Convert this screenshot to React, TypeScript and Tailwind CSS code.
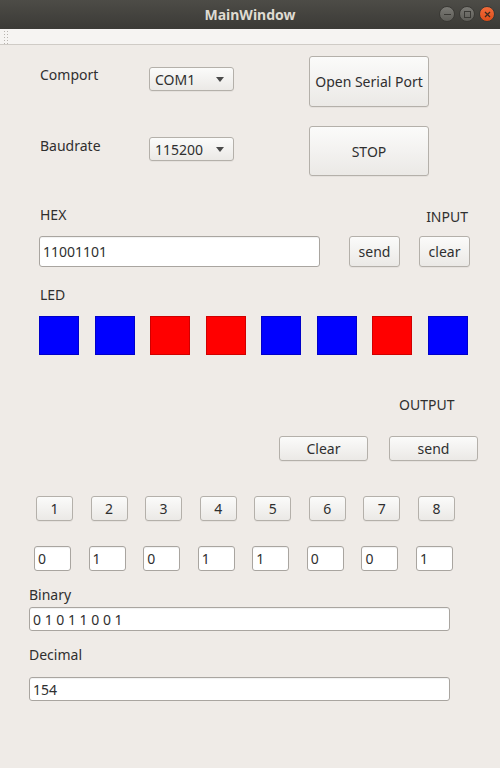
import React from 'react';

const font = { fontFamily: '"Noto Sans", "Open Sans", sans-serif' };

const face =
  'rounded-[3px] border border-[#b4b0aa] bg-gradient-to-b from-[#fbfbfa] to-[#ebe9e6] text-[14px] text-[#2f2f2f] shadow-[0_1px_0_rgba(0,0,0,0.04)]';
const btn = `flex items-center justify-center ${face}`;
const field =
  'flex items-center rounded-[3px] border border-[#a9a5a0] bg-white text-[14px] text-[#2f2f2f] pl-[3px] shadow-[inset_0_1px_1px_rgba(0,0,0,0.06)]';

const leds = [true, true, false, false, true, true, false, true];
const bits = ['0', '1', '0', '1', '1', '0', '0', '1'];

const Combo = ({ value }: { value: string }) => (
  <div className={`flex items-center justify-between ${face} w-[85px] h-[24px] pl-[5px] pr-[9px]`}>
    <span>{value}</span>
    <svg width="8" height="5" viewBox="0 0 8 5">
      <path d="M0 0 L8 0 L4 5 Z" fill="#4a4a4a" />
    </svg>
  </div>
);

const TitleBar = () => (
  <div className="relative h-[29px] bg-gradient-to-b from-[#4d4c47] to-[#3b3a36] flex items-center justify-center">
    <span className="text-[14px] font-bold text-[#dfdbd2]">MainWindow</span>
    <div className="absolute right-[5px] top-[6px] flex gap-[4px]">
      <div className="w-[16px] h-[16px] rounded-full bg-gradient-to-b from-[#7b7a75] to-[#5e5d58] border border-[#3a3935] flex items-center justify-center">
        <div className="w-[7px] h-[1px] bg-[#3a3935]" />
      </div>
      <div className="w-[16px] h-[16px] rounded-full bg-gradient-to-b from-[#7b7a75] to-[#5e5d58] border border-[#3a3935] flex items-center justify-center">
        <div className="w-[7px] h-[7px] border border-[#3a3935]" />
      </div>
      <div className="w-[16px] h-[16px] rounded-full bg-gradient-to-b from-[#f26b3a] to-[#de4d17] border border-[#3a3935] flex items-center justify-center">
        <svg width="7" height="7" viewBox="0 0 7 7">
          <path d="M1 1 L6 6 M6 1 L1 6" stroke="#3a2a20" strokeWidth="1.3" />
        </svg>
      </div>
    </div>
  </div>
);

const App = () => {
  return (
    <div className="w-[500px] h-[768px] bg-[#efebe7] flex flex-col text-[#2f2f2f]" style={font}>
      <TitleBar />

      {/* toolbar strip */}
      <div className="h-[16px] bg-[#f6f4f2] border-b border-[#cfcbc6] flex items-start pl-[4px] pt-[2px]">
        <div className="grid grid-cols-2 gap-x-[2px] gap-y-[2px]">
          {Array.from({ length: 10 }).map((_, i) => (
            <div key={i} className="w-[1px] h-[1px] bg-[#b8b4af]" />
          ))}
        </div>
      </div>

      {/* Comport row */}
      <div className="flex items-start mt-[11px]">
        <div className="ml-[40px] mt-[9px] w-[109px] leading-[20px] text-[14px]">Comport</div>
        <div className="mt-[11px]">
          <Combo value="COM1" />
        </div>
        <div className={`${btn} ml-[75px] w-[120px] h-[51px]`}>Open Serial Port</div>
      </div>

      {/* Baudrate row */}
      <div className="flex items-start mt-[19px]">
        <div className="ml-[40px] mt-[10px] w-[109px] leading-[20px] text-[14px]">Baudrate</div>
        <div className="mt-[11px]">
          <Combo value="115200" />
        </div>
        <div className={`${btn} ml-[75px] w-[120px] h-[50px]`}>STOP</div>
      </div>

      {/* HEX / INPUT */}
      <div className="flex items-end justify-between mt-[29px] pl-[40px] pr-[32px] h-[22px] text-[14px] leading-[20px]">
        <span className="self-start">HEX</span>
        <span>INPUT</span>
      </div>
      <div className="flex mt-[9px] pl-[39px]">
        <div className={`${field} w-[281px] h-[31px]`}>11001101</div>
        <div className={`${btn} ml-[29px] w-[51px] h-[31px]`}>send</div>
        <div className={`${btn} ml-[19px] w-[51px] h-[31px]`}>clear</div>
      </div>

      {/* LED */}
      <div className="mt-[18px] pl-[40px] text-[14px] leading-[20px]">LED</div>
      <div className="mt-[11px] ml-[39px] w-[429px] flex justify-between">
        {leds.map((b, i) => (
          <div
            key={i}
            className={
              b
                ? 'w-[40px] h-[39px] bg-[#0000ff] border border-[#0000c8]'
                : 'w-[40px] h-[39px] bg-[#ff0000] border border-[#d00000]'
            }
          />
        ))}
      </div>

      {/* OUTPUT */}
      <div className="mt-[40px] pl-[399px] text-[14px] leading-[20px]">OUTPUT</div>
      <div className="flex mt-[21px] pl-[279px]">
        <div className={`${btn} w-[89px] h-[25px]`}>Clear</div>
        <div className={`${btn} ml-[21px] w-[89px] h-[25px]`}>send</div>
      </div>

      {/* bit buttons */}
      <div className="mt-[35px] ml-[36px] w-[419px] flex justify-between">
        {['1', '2', '3', '4', '5', '6', '7', '8'].map((n) => (
          <div key={n} className={`${btn} w-[37px] h-[25px]`}>
            {n}
          </div>
        ))}
      </div>

      {/* bit values */}
      <div className="mt-[25px] ml-[34px] w-[419px] flex justify-between">
        {bits.map((v, i) => (
          <div key={i} className={`${field} w-[37px] h-[25px]`}>
            {v}
          </div>
        ))}
      </div>

      {/* Binary */}
      <div className="mt-[14px] pl-[29px] text-[14px] leading-[20px]">Binary</div>
      <div className={`${field} mt-[2px] ml-[29px] w-[421px] h-[24px]`}>0 1 0 1 1 0 0 1</div>

      {/* Decimal */}
      <div className="mt-[14px] pl-[29px] text-[14px] leading-[20px]">Decimal</div>
      <div className={`${field} mt-[12px] ml-[29px] w-[421px] h-[24px]`}>154</div>
    </div>
  );
};

export default App;
